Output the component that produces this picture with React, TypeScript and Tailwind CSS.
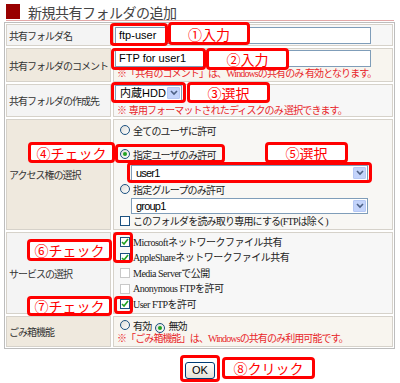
import React from 'react';

const jp = "font-['Noto_Sans_CJK_JP',sans-serif]";
const serifJp = "font-['Liberation_Serif','Noto_Sans_CJK_JP',serif]";
const sansJp = "font-['Liberation_Sans','Noto_Sans_CJK_JP',sans-serif]";

function Radio({ checked }: { checked?: boolean }) {
  return (
    <span className="inline-flex items-center justify-center w-[10px] h-[10px] rounded-full border border-[#1c5180] bg-gradient-to-br from-[#dcdcd7] to-white shrink-0">
      {checked && <span className="w-[4px] h-[4px] rounded-full bg-[#21a121]" />}
    </span>
  );
}

function Check({ checked, dim }: { checked?: boolean; dim?: boolean }) {
  return (
    <span
      className={`inline-flex items-center justify-center w-[10px] h-[10px] border bg-white shrink-0 ${
        dim ? 'border-[#c8c8c8]' : 'border-[#1c5180]'
      }`}
    >
      {checked && (
        <svg width="8" height="8" viewBox="0 0 8 8">
          <path d="M1 4l2 2 4-5" stroke="#21a121" strokeWidth="1.6" fill="none" />
        </svg>
      )}
    </span>
  );
}

function Select({ value, className }: { value: string; className: string }) {
  return (
    <div className={`flex items-center h-[16px] border border-[#7f9db9] bg-white ${sansJp} ${className}`}>
      <span className="flex-1 pl-[4px] text-[11px] leading-[14px] text-black">{value}</span>
      <span className="flex items-center justify-center w-[13px] h-[12px] mr-[1px] rounded-[1px] border border-[#b5c8f4] bg-[#c4d4fb]">
        <svg width="8" height="6" viewBox="0 0 8 6">
          <path d="M1 1l3 3 3-3" stroke="#4d6185" strokeWidth="1.6" fill="none" />
        </svg>
      </span>
    </div>
  );
}

function Input({ value }: { value: string }) {
  return (
    <div className={`w-[256px] h-[17px] border border-[#7f9db9] bg-white pl-[3px] text-[11px] leading-[15px] text-black ${sansJp}`}>
      {value}
    </div>
  );
}

function Box({ className }: { className: string }) {
  return <div className={`absolute rounded-[4px] border-[3px] border-[#ff0000] ${className}`} />;
}

function Tag({ className, children }: { className: string; children: React.ReactNode }) {
  return (
    <div
      className={`absolute flex items-center justify-center rounded-[4px] border-[3px] border-[#ff0000] bg-white text-[14px] leading-none text-[#ff0000] ${jp} ${className}`}
    >
      {children}
    </div>
  );
}

const labelCell =
  'flex items-center w-[105px] shrink-0 border border-[#d6d2ca] pl-[2px] text-[10px] tracking-[-1px] text-[#333]';
const note = 'text-[10px] leading-[13px] tracking-[-0.9px] text-[#e8262a]';

export default function App() {
  return (
    <div className={`relative w-[400px] h-[383px] overflow-hidden bg-white ${jp}`}>
      {/* Title */}
      <div className="ml-[6px] mt-[4px] w-[388px] h-[17px] flex items-start border-b border-[#e2a8a8]">
        <div className="w-[14px] h-[15px] bg-[#990000]" />
        <div className="ml-[8px] text-[14px] leading-[16px] tracking-[-0.5px] text-[#444]">新規共有フォルダの追加</div>
      </div>

      {/* Form table */}
      <div className="ml-[4px] mt-[1px] w-[391px] border border-[#bdbdbd] p-[1px] flex flex-col gap-[2px]">
        <div className="flex gap-[2px] h-[22px]">
          <div className={`${labelCell} bg-[#f4f4f4]`}>共有フォルダ名</div>
          <div className="flex-1 border border-[#d6d2ca] bg-[#f7f7f7] pl-[1px] pt-[2px]">
            <Input value="ftp-user" />
          </div>
        </div>

        <div className="flex gap-[2px] h-[34px]">
          <div className={`${labelCell} bg-[#efe9de]`}>共有フォルダのコメント</div>
          <div className="flex-1 border border-[#d6d2ca] bg-[#f8f5ef] pl-[1px] pt-[1px]">
            <Input value="FTP for user1" />
            <div className={`ml-[2px] ${note} ${serifJp}`}>※「共有のコメント」は、Windowsの共有のみ 有効となります。</div>
          </div>
        </div>

        <div className="flex gap-[2px] h-[33px]">
          <div className={`${labelCell} bg-[#f4f4f4]`}>共有フォルダの作成先</div>
          <div className="flex-1 border border-[#d6d2ca] bg-[#f7f7f7] pl-[1px]">
            <Select value="内蔵HDD" className="w-[67px]" />
            <div className={`ml-[2px] mt-[2px] ${note}`}>※&nbsp;&nbsp;専用フォーマットされたディスクのみ 選択できます。</div>
          </div>
        </div>

        <div className="flex gap-[2px] h-[111px]">
          <div className={`${labelCell} bg-[#efe9de]`}>アクセス権の選択</div>
          <div className="flex-1 border border-[#d6d2ca] bg-[#f8f7f4] pl-[6px] pt-[2px] text-[10px] tracking-[-0.8px] text-[#222]">
            <div className="flex items-center gap-[3px] h-[16px]">
              <Radio />
              <span>全てのユーザに許可</span>
            </div>
            <div className="flex items-center gap-[3px] h-[16px] mt-[8px]">
              <Radio checked />
              <span>指定ユーザのみ許可</span>
            </div>
            <Select value="user1" className="ml-[11px] mt-[3px] w-[237px]" />
            <div className="flex items-center gap-[3px] h-[16px]">
              <Radio />
              <span>指定グループのみ許可</span>
            </div>
            <Select value="group1" className="ml-[11px] mt-[1px] w-[237px]" />
            <div className={`flex items-center gap-[3px] h-[14px] ${serifJp}`}>
              <Check />
              <span>このフォルダを読み取り専用にする(FTPは除く)</span>
            </div>
          </div>
        </div>

        <div className="flex gap-[2px] h-[82px]">
          <div className={`${labelCell} bg-[#f4f4f4]`}>サービスの選択</div>
          <div className={`flex-1 border border-[#d6d2ca] bg-[#f7f7f7] pl-[6px] pt-[1px] text-[10px] tracking-[-0.5px] text-[#222] ${serifJp}`}>
            <div className="flex items-center gap-[3px] h-[16px]">
              <Check checked />
              <span>Microsoftネットワークファイル共有</span>
            </div>
            <div className="flex items-center gap-[3px] h-[15px]">
              <Check checked />
              <span>AppleShareネットワークファイル共有</span>
            </div>
            <div className="flex items-center gap-[3px] h-[16px]">
              <Check dim />
              <span>Media Serverで公開</span>
            </div>
            <div className="flex items-center gap-[3px] h-[15px]">
              <Check dim />
              <span>Anonymous FTPを許可</span>
            </div>
            <div className="flex items-center gap-[3px] h-[16px]">
              <Check checked />
              <span>User FTPを許可</span>
            </div>
          </div>
        </div>

        <div className="flex gap-[2px] h-[31px]">
          <div className={`${labelCell} bg-[#efe9de]`}>ごみ箱機能</div>
          <div className="flex-1 border border-[#d6d2ca] bg-[#f8f5ef] pl-[6px] pt-[1px]">
            <div className="flex items-center h-[14px] text-[10px] tracking-[-0.8px] text-[#222]">
              <Radio />
              <span className="ml-[3px]">有効</span>
              <span className="ml-[4px]">
                <Radio checked />
              </span>
              <span className="ml-[3px]">無効</span>
            </div>
            <div className={`-ml-[3px] ${note} ${serifJp}`}>※「ごみ箱機能」は、Windowsの共有のみ利用可能です。</div>
          </div>
        </div>
      </div>

      {/* Submit */}
      <div className="flex justify-center mt-[13px]">
        <button className={`w-[30px] h-[17px] rounded-[3px] border border-[#003c74] bg-gradient-to-b from-white to-[#e3e1d6] text-[11px] leading-none text-black ${sansJp}`}>
          OK
        </button>
      </div>

      {/* Annotations */}
      <Box className="left-[110px] top-[23px] w-[58px] h-[23px]" />
      <Tag className="left-[168px] top-[22px] w-[82px] h-[23px]">①入力</Tag>
      <Box className="left-[111px] top-[48px] w-[95px] h-[22px]" />
      <Tag className="left-[206px] top-[48px] w-[83px] h-[22px]">②入力</Tag>
      <Box className="left-[111px] top-[82px] w-[75px] h-[21px]" />
      <Tag className="left-[187px] top-[82px] w-[83px] h-[21px]">③選択</Tag>
      <Tag className="left-[28px] top-[142px] w-[87px] h-[21px]">④チェック</Tag>
      <Box className="left-[115px] top-[144px] w-[110px] h-[19px]" />
      <Tag className="left-[265px] top-[142px] w-[83px] h-[21px]">⑤選択</Tag>
      <Box className="left-[127px] top-[162px] w-[245px] h-[21px]" />
      <Tag className="left-[27px] top-[239px] w-[85px] h-[22px]">⑥チェック</Tag>
      <Box className="left-[113px] top-[232px] w-[20px] h-[31px]" />
      <Tag className="left-[27px] top-[296px] w-[85px] h-[20px]">⑦チェック</Tag>
      <Box className="left-[114px] top-[296px] w-[19px] h-[18px]" />
      <Box className="left-[180px] top-[355px] w-[40px] h-[27px]" />
      <Tag className="left-[222px] top-[357px] w-[93px] h-[22px]">⑧クリック</Tag>
    </div>
  );
}
